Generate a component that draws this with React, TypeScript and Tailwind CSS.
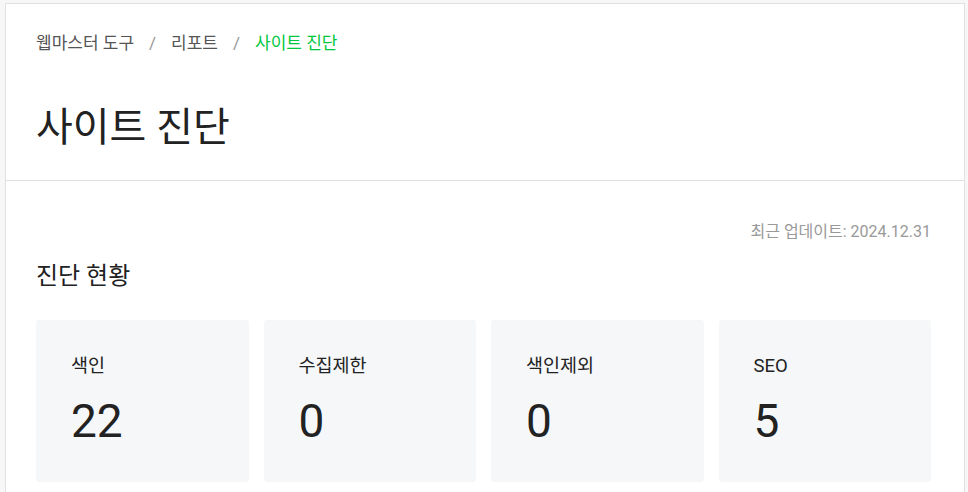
import React from "react";

const stats = [
  { label: "색인", value: "22" },
  { label: "수집제한", value: "0" },
  { label: "색인제외", value: "0" },
  { label: "SEO", value: "5" },
];

export default function App() {
  return (
    <div
      className="min-h-[492px] w-[968px] bg-[#f7f7f7] pt-[3px] pl-[5px] pr-[3px]"
      style={{ fontFamily: 'Roboto, "Noto Sans CJK KR", sans-serif' }}
    >
      <div className="min-h-[489px] border border-b-0 border-[#e1e1e1] bg-white">
        <div className="border-b border-[#e1e1e1] px-[30px] pt-[27px] pb-[24px]">
          <nav className="flex items-center text-[17px] leading-[24px] text-[#555]">
            <span>웹마스터 도구</span>
            <span className="mx-[15px] text-[#999]">/</span>
            <span>리포트</span>
            <span className="mx-[15px] text-[#999]">/</span>
            <span className="text-[#00c73c]">사이트 진단</span>
          </nav>
          <h1 className="mt-[45px] text-[40px] leading-[56px] text-[#222]">사이트 진단</h1>
        </div>
        <div className="pl-[30px] pr-[33px] pt-[40px]">
          <div className="text-right text-[16px] leading-[22px] text-[#999]">
            최근 업데이트: 2024.12.31
          </div>
          <h2 className="mt-[17px] text-[24px] leading-[32px] text-[#222]">진단 현황</h2>
          <div className="mt-[28px] grid grid-cols-4 gap-[15px]">
            {stats.map((s) => (
              <div key={s.label} className="h-[162px] rounded-[3px] bg-[#f5f7f9] px-[35px] pt-[33px]">
                <div className="text-[18.5px] leading-[26px] text-[#222]">{s.label}</div>
                <div className="mt-[14px] text-[46px] leading-[56px] text-[#222]">{s.value}</div>
              </div>
            ))}
          </div>
        </div>
      </div>
    </div>
  );
}
